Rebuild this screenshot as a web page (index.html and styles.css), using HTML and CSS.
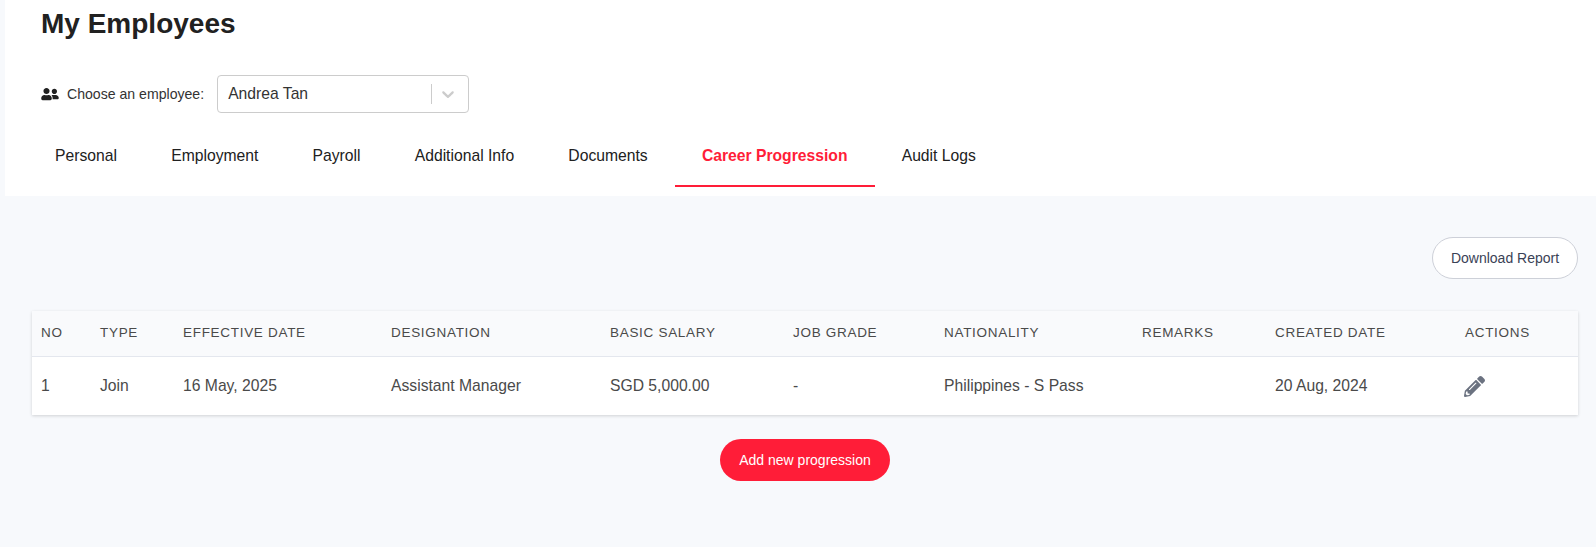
FILE: index.html
```html
<!DOCTYPE html>
<html lang="en">
<head>
  <meta charset="UTF-8">
  <meta name="viewport" content="width=device-width, initial-scale=1.0">
  <title>My Employees</title>
  <link rel="stylesheet" href="styles.css">
</head>
<body>
  <header class="top-panel">
    <h1 class="page-title">My Employees</h1>
    <div class="employee-picker">
      <svg class="picker-icon" viewBox="0 0 640 512" aria-hidden="true"><path d="M192 256c61.9 0 112-50.1 112-112S253.9 32 192 32 80 82.1 80 144s50.1 112 112 112zm76.8 32h-8.3c-20.8 10-43.9 16-68.5 16s-47.6-6-68.5-16h-8.3C51.6 288 0 339.6 0 403.2V432c0 26.5 21.5 48 48 48h288c26.5 0 48-21.5 48-48v-28.8c0-63.6-51.6-115.2-115.2-115.2zM480 256c53 0 96-43 96-96s-43-96-96-96-96 43-96 96 43 96 96 96zm48 32h-3.8c-13.9 4.8-28.6 8-44.2 8s-30.3-3.2-44.2-8H432c-20.4 0-39.2 5.9-55.7 15.4 24.4 26.3 39.7 61.2 39.7 99.8v38.4c0 2.2-.5 4.3-.6 6.4H592c26.5 0 48-21.5 48-48 0-61.9-50.1-112-112-112z"/></svg>
      <label class="picker-label">Choose an employee:</label>
      <div class="select-box">
        <span class="select-value">Andrea Tan</span>
        <span class="select-divider"></span>
        <svg class="select-arrow" viewBox="0 0 20 20" aria-hidden="true"><path d="M4.516 7.548c.436-.446 1.043-.481 1.576 0L10 11.295l3.908-3.747c.533-.481 1.141-.446 1.574 0 .436.445.408 1.197 0 1.615-.406.418-4.695 4.502-4.695 4.502a1.095 1.095 0 0 1-1.576 0S4.924 9.581 4.516 9.163c-.409-.418-.436-1.17 0-1.615z"/></svg>
      </div>
    </div>
    <nav class="tabs">
      <a class="tab" href="#">Personal</a>
      <a class="tab" href="#">Employment</a>
      <a class="tab" href="#">Payroll</a>
      <a class="tab" href="#">Additional Info</a>
      <a class="tab" href="#">Documents</a>
      <a class="tab active" href="#">Career Progression</a>
      <a class="tab" href="#">Audit Logs</a>
    </nav>
  </header>

  <main class="content">
    <div class="report-row">
      <button class="btn-outline" type="button">Download Report</button>
    </div>
    <table class="progress-table">
      <thead>
        <tr>
          <th class="col-no">No</th>
          <th class="col-type">Type</th>
          <th class="col-date">Effective Date</th>
          <th class="col-title">Designation</th>
          <th class="col-salary">Basic Salary</th>
          <th class="col-grade">Job Grade</th>
          <th class="col-nation">Nationality</th>
          <th class="col-remarks">Remarks</th>
          <th class="col-created">Created Date</th>
          <th class="col-actions">Actions</th>
        </tr>
      </thead>
      <tbody>
        <tr>
          <td>1</td>
          <td>Join</td>
          <td>16 May, 2025</td>
          <td>Assistant Manager</td>
          <td>SGD 5,000.00</td>
          <td>-</td>
          <td>Philippines - S Pass</td>
          <td></td>
          <td>20 Aug, 2024</td>
          <td>
            <svg class="edit-icon" viewBox="0 0 512 512" aria-hidden="true"><path d="M497.9 142.1l-46.1 46.1c-4.7 4.7-12.3 4.7-17 0l-111-111c-4.7-4.7-4.7-12.3 0-17l46.1-46.1c18.7-18.7 49.1-18.7 67.9 0l60.1 60.1c18.8 18.7 18.8 49.1 0 67.9zM284.2 99.8L21.6 362.4.4 483.9c-2.9 16.4 11.4 30.6 27.8 27.8l121.5-21.3 262.6-262.6c4.7-4.7 4.7-12.3 0-17l-111-111c-4.8-4.7-12.4-4.7-17.1 0zM124.1 339.9c-5.5-5.5-5.5-14.3 0-19.8l154-154c5.5-5.5 14.3-5.5 19.8 0s5.5 14.3 0 19.8l-154 154c-5.5 5.5-14.3 5.5-19.8 0zM88 424h48v36.3l-64.5 11.3-31.1-31.1L51.7 376H88v48z"/></svg>
          </td>
        </tr>
      </tbody>
    </table>
    <div class="add-row">
      <button class="btn-primary" type="button">Add new progression</button>
    </div>
  </main>
</body>
</html>
```

FILE: styles.css
```css
* {
  box-sizing: border-box;
}
html, body {
  height: 100%;
}
body {
  margin: 0;
  background-color: #f7f9fc;
  color: #212121;
  font-family: "Liberation Sans", Arial, sans-serif;
  overflow: hidden;
}
.top-panel {
  margin-left: 5px;
  height: 196px;
  background: #fff;
  padding-left: 23px;
}
.page-title {
  margin: 0;
  padding: 9px 0 0 13px;
  font-size: 28px;
  line-height: 30px;
  font-weight: bold;
  color: #212121;
}
.employee-picker {
  display: flex;
  align-items: center;
  margin-top: 36px;
  padding-left: 13px;
  height: 37px;
}
.picker-icon {
  width: 18px;
  height: 14px;
  fill: #212121;
  margin-right: 8px;
}
.picker-label {
  font-size: 14.1px;
  color: #333;
  margin-right: 13px;
}
.select-box {
  display: flex;
  align-items: center;
  width: 252px;
  height: 38px;
  border: 1px solid #ccc;
  border-radius: 4px;
  padding: 0 10px 0 10px;
  background: #fff;
}
.select-value {
  flex: 1;
  font-size: 15.7px;
  color: #333;
}
.select-divider {
  width: 1px;
  height: 20px;
  background: #ccc;
  margin-right: 6px;
}
.select-arrow {
  width: 20px;
  height: 20px;
  fill: #ccc;
}
.tabs {
  display: flex;
  margin-top: 21px;
  height: 54px;
}
.tab {
  display: block;
  height: 54px;
  padding: 0 27.1px;
  line-height: 45px;
  font-size: 15.7px;
  color: #212121;
  text-decoration: none;
}
.tab.active {
  color: #ff1d38;
  font-weight: bold;
  border-bottom: 2px solid #ff1d38;
}
.content {
  padding: 41px 18px 0 32px;
}
.report-row {
  display: flex;
  justify-content: flex-end;
}
.btn-outline {
  width: 146px;
  height: 42px;
  border: 1px solid #cdd0d8;
  border-radius: 21px;
  background: #fff;
  color: #3a4256;
  font-family: inherit;
  font-size: 14px;
}
.progress-table {
  width: 100%;
  margin-top: 32px;
  border-collapse: collapse;
  table-layout: fixed;
  background: #fff;
  box-shadow: 0 1px 3px rgba(0, 0, 0, 0.16);
}
.progress-table th {
  height: 45px;
  padding: 0 0 2px 9px;
  background: #f9fafc;
  border-bottom: 1px solid #e4e7ee;
  text-align: left;
  font-size: 13.5px;
  font-weight: normal;
  letter-spacing: 0.7px;
  text-transform: uppercase;
  color: #4a4a4a;
}
.progress-table td {
  height: 59px;
  padding: 1px 0 0 9px;
  font-size: 15.7px;
  color: #4a4a4a;
}
.col-no { width: 59px; }
.col-type { width: 83px; }
.col-date { width: 208px; }
.col-title { width: 219px; }
.col-salary { width: 183px; }
.col-grade { width: 151px; }
.col-nation { width: 198px; }
.col-remarks { width: 133px; }
.col-created { width: 190px; }
.col-actions { width: 122px; }
.edit-icon {
  display: block;
  width: 21px;
  height: 21px;
  margin-left: -1px;
  fill: #6b7280;
}
.add-row {
  display: flex;
  justify-content: center;
  margin-top: 24px;
}
.btn-primary {
  width: 170px;
  height: 42px;
  border: none;
  border-radius: 21px;
  background: #ff1d38;
  color: #fff;
  font-family: inherit;
  font-size: 14px;
}
```
